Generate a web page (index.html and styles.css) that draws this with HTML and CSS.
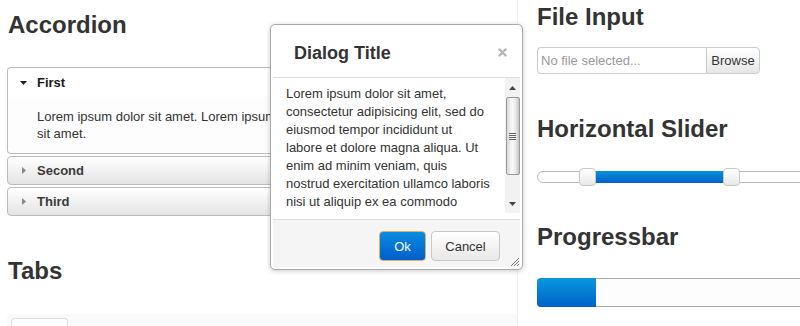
FILE: index.html
```html
<!DOCTYPE html>
<html>
<head>
<meta charset="utf-8">
<link rel="stylesheet" href="styles.css">
</head>
<body>
<div class="page">
  <div class="col-left">
    <h2 class="h h-acc">Accordion</h2>
    <div class="accordion">
      <div class="acc-head active"><span class="ico"><svg width="7" height="4" viewBox="0 0 7 4"><path d="M0 0H7L3.5 4Z" fill="#222"/></svg></span>First</div>
      <div class="acc-body">Lorem ipsum dolor sit amet. Lorem ipsum dolor sit amet. Lorem ipsum dolor sit amet.</div>
      <div class="acc-head"><span class="ico"><svg width="4" height="7" viewBox="0 0 4 7"><path d="M0 0L4 3.5L0 7Z" fill="#888"/></svg></span>Second</div>
      <div class="acc-head"><span class="ico"><svg width="4" height="7" viewBox="0 0 4 7"><path d="M0 0L4 3.5L0 7Z" fill="#888"/></svg></span>Third</div>
    </div>
    <h2 class="h h-tabs">Tabs</h2>
    <div class="tabs"><div class="tab"></div></div>
  </div>
  <div class="col-right">
    <h2 class="h h-file">File Input</h2>
    <div class="file">
      <div class="file-input">No file selected...</div>
      <div class="browse">Browse</div>
    </div>
    <h2 class="h h-slider">Horizontal Slider</h2>
    <div class="slider">
      <div class="range"></div>
      <div class="handle h1"></div>
      <div class="handle h2"></div>
    </div>
    <h2 class="h h-prog">Progressbar</h2>
    <div class="progress"><div class="progress-value"></div></div>
  </div>
</div>

<div class="dialog">
  <div class="dlg-title">
    <span class="dlg-title-text">Dialog Title</span>
    <svg class="dlg-close" width="9" height="9" viewBox="0 0 9 9"><path d="M1.5 1.5L7.5 7.5M7.5 1.5L1.5 7.5" stroke="#b3b3b3" stroke-width="2.4" stroke-linecap="round"/></svg>
  </div>
  <div class="dlg-scroll">
    <div class="dlg-text">Lorem ipsum dolor sit amet, consectetur adipisicing elit, sed do eiusmod tempor incididunt ut labore et dolore magna aliqua. Ut enim ad minim veniam, quis nostrud exercitation ullamco laboris nisi ut aliquip ex ea commodo consequat. Duis aute irure dolor in reprehenderit in voluptate velit esse cillum dolore eu fugiat nulla pariatur.</div>
    <div class="sb">
      <div class="sb-btn"><svg width="7" height="4" viewBox="0 0 7 4"><path d="M0 4H7L3.5 0Z" fill="#444"/></svg></div>
      <div class="sb-thumb">
        <div class="grip"></div><div class="grip"></div><div class="grip"></div><div class="grip"></div>
      </div>
      <div class="sb-track"></div>
      <div class="sb-btn"><svg width="7" height="4" viewBox="0 0 7 4"><path d="M0 0H7L3.5 4Z" fill="#444"/></svg></div>
    </div>
  </div>
  <div class="dlg-foot">
    <div class="btn btn-ok">Ok</div>
    <div class="btn btn-cancel">Cancel</div>
  </div>
  <svg class="resize" width="11" height="11" viewBox="0 0 11 11"><path d="M10 2L2 10M10 5L5 10M10 8L8 10" stroke="#777" stroke-width="1"/></svg>
</div>
</body>
</html>
```

FILE: styles.css
```css
html, body {
  margin: 0;
  padding: 0;
}
body {
  width: 800px;
  height: 326px;
  overflow: hidden;
  background: #fff;
  font-family: "Liberation Sans", Arial, sans-serif;
  font-size: 13px;
  color: #333;
  position: relative;
}
.page {
  display: flex;
  height: 326px;
}
.col-left {
  flex: none;
  width: 510px;
  margin-left: 7px;
  border-right: 1px solid #efefef;
}
.col-right {
  flex: none;
  width: 300px;
  margin-left: 19px;
}
.h {
  margin: 0;
  font-size: 24px;
  line-height: 28px;
  font-weight: bold;
  color: #333;
}
.h-acc { margin-top: 11px; padding-left: 1px; }
.h-tabs { margin-top: 41px; padding-left: 1px; }
.h-file { margin-top: 3px; }
.h-slider { margin-top: 41px; }
.h-prog { margin-top: 40px; }

/* Accordion */
.accordion { margin-top: 28px; }
.acc-head {
  height: 27px;
  border: 1px solid #bbb;
  border-radius: 4px;
  background: linear-gradient(#ffffff, #e4e4e4);
  display: flex;
  align-items: center;
  padding-left: 12px;
  font-weight: bold;
  color: #3a3a3a;
  margin-top: 2px;
}
.acc-head.active {
  margin-top: 0;
  height: 29px;
  border-bottom: none;
  border-radius: 4px 4px 0 0;
  background: #fff;
  color: #1a1a1a;
}
.ico {
  width: 7px;
  margin-right: 10px;
  display: flex;
  justify-content: center;
  align-items: center;
}
.acc-body {
  border: 1px solid #bbb;
  border-top: none;
  border-radius: 0 0 4px 4px;
  padding: 11px 40px 11px 29px;
  height: 34px;
  line-height: 17px;
  background: #fdfdfd;
  color: #333;
}

/* Tabs */
.tabs {
  margin-top: 29px;
  height: 30px;
  background: #fafafa;
  border-radius: 4px;
  padding: 4px 4px 0;
}
.tab {
  width: 55px;
  height: 30px;
  background: #fff;
  border: 1px solid #ddd;
  border-bottom: none;
  border-radius: 4px 4px 0 0;
}

/* File input */
.file {
  margin-top: 16px;
  display: flex;
  height: 27px;
}
.file-input {
  box-sizing: border-box;
  width: 169px;
  border: 1px solid #ccc;
  border-right: none;
  border-radius: 4px 0 0 4px;
  padding-left: 3px;
  color: #999;
  display: flex;
  align-items: center;
  background: #fff;
}
.browse {
  box-sizing: border-box;
  width: 54px;
  border: 1px solid #ccc;
  border-radius: 0 4px 4px 0;
  background: linear-gradient(#ffffff, #e6e6e6);
  display: flex;
  align-items: center;
  justify-content: center;
  color: #333;
}

/* Slider */
.slider {
  margin-top: 28px;
  position: relative;
  box-sizing: border-box;
  height: 12px;
  border: 1px solid #bbb;
  border-radius: 6px;
  background: #fff;
}
.range {
  position: absolute;
  left: 49px;
  width: 144px;
  top: -1px;
  bottom: -1px;
  background: linear-gradient(#0a8fdc, #0062c8);
}
.handle {
  position: absolute;
  top: -4px;
  width: 17px;
  height: 18px;
  box-sizing: border-box;
  border: 1px solid #c8c8c8;
  border-radius: 4px;
  background: linear-gradient(#ffffff, #e8e8e8);
}
.handle.h1 { left: 41px; }
.handle.h2 { left: 185px; }

/* Progressbar */
.progress {
  margin-top: 27px;
  box-sizing: border-box;
  height: 29px;
  border: 1px solid #aaa;
  border-radius: 4px;
  background: #fdfdfd;
  display: flex;
  align-items: flex-start;
}
.progress-value {
  width: 59px;
  height: 29px;
  margin: -1px 0 0 -1px;
  border-radius: 4px 0 0 4px;
  background: linear-gradient(#0a97dd, #0062c9);
}

/* Dialog */
.dialog {
  position: absolute;
  left: 270px;
  top: 24px;
  width: 253px;
  height: 246px;
  box-sizing: border-box;
  border: 1px solid #aaa;
  border-radius: 5px;
  background: #fff;
  padding: 2px;
  box-shadow: 0 1px 5px rgba(0, 0, 0, 0.22);
  display: flex;
  flex-direction: column;
}
.dlg-title {
  position: relative;
  padding: 15px 0 11px 21px;
  line-height: 22px;
  border-bottom: 1px solid #ddd;
}
.dlg-title-text {
  font-size: 18px;
  font-weight: bold;
  color: #333;
}
.dlg-close {
  position: absolute;
  left: 225px;
  top: 21px;
}
.dlg-scroll {
  display: flex;
  height: 135px;
  flex: none;
}
.dlg-text {
  width: 205px;
  padding: 7px 14px 0 13px;
  line-height: 18px;
  overflow: hidden;
  color: #333;
}
.sb {
  width: 15px;
  background: #f2f2f2;
  display: flex;
  flex-direction: column;
  align-items: center;
}
.sb-btn {
  height: 19px;
  width: 15px;
  display: flex;
  align-items: center;
  justify-content: center;
}
.sb-thumb {
  box-sizing: border-box;
  width: 14px;
  height: 78px;
  border: 1px solid #9a9a9a;
  border-radius: 2px;
  background: linear-gradient(90deg, #d8d8d8, #fbfbfb 45%, #e6e6e6 75%, #c4c4c4);
  display: flex;
  flex-direction: column;
  align-items: center;
  justify-content: center;
  gap: 1px;
}
.grip {
  width: 7px;
  height: 1px;
  background: #666;
}
.sb-track { flex: 1; }
.dlg-foot {
  margin-top: 6px;
  flex: 1;
  border-top: 1px solid #ddd;
  background: #f5f5f5;
  display: flex;
  justify-content: flex-end;
  align-items: flex-start;
  gap: 5px;
  padding: 11px 20px 0 0;
}
.btn {
  box-sizing: border-box;
  height: 30px;
  border-radius: 4px;
  display: flex;
  align-items: center;
  justify-content: center;
  font-size: 13px;
}
.btn-ok {
  width: 47px;
  border: 1px solid #d9b25f;
  background: linear-gradient(#0a8ce0, #005ecb);
  color: #fff;
}
.btn-cancel {
  width: 69px;
  border: 1px solid #c8c8c8;
  background: linear-gradient(#ffffff, #e8e8e8);
  color: #333;
}
.resize {
  position: absolute;
  right: 2px;
  bottom: 2px;
}
```
